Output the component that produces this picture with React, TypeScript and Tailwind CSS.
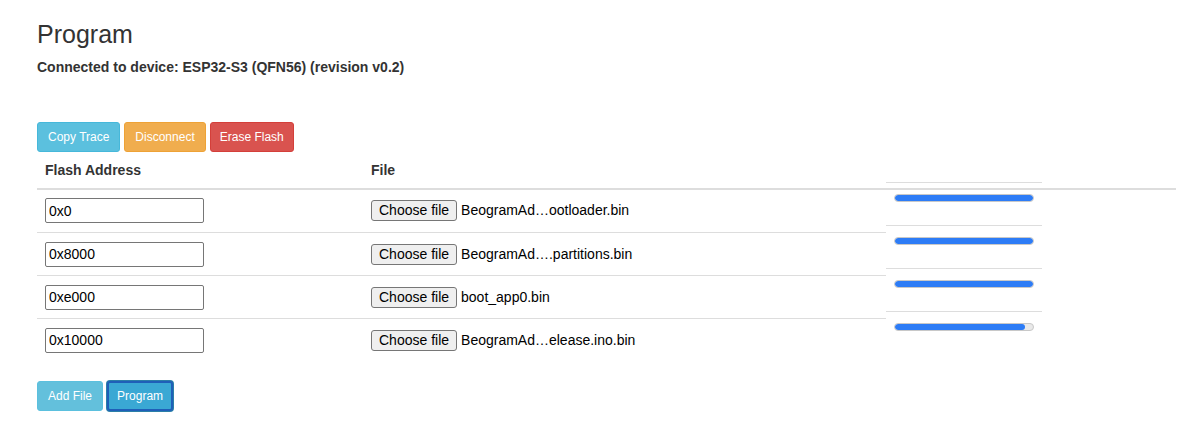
import React from "react";

const rows = [
  { addr: "0x0", file: "BeogramAd…ootloader.bin", pct: 100 },
  { addr: "0x8000", file: "BeogramAd….partitions.bin", pct: 100 },
  { addr: "0xe000", file: "boot_app0.bin", pct: 100 },
  { addr: "0x10000", file: "BeogramAd…elease.ino.bin", pct: 94 },
];

export default function App() {
  return (
    <div
      className="min-h-[431px] w-[1189px] bg-white pl-[37px] text-[#333]"
      style={{ fontFamily: '"Liberation Sans", Arial, sans-serif' }}
    >
      <h3 className="pt-[21px] text-[25px] leading-[26px] font-medium">Program</h3>
      <div className="mt-[11px] text-[14px] leading-[18px] font-bold">
        Connected to device: ESP32-S3 (QFN56) (revision v0.2)
      </div>

      <div className="mt-[46px] flex gap-[4px]">
        <button className="h-[30px] rounded-[3px] border border-[#46b8da] bg-[#5bc0de] px-[10px] text-[12px] text-white">
          Copy Trace
        </button>
        <button className="h-[30px] rounded-[3px] border border-[#eea236] bg-[#f0ad4e] px-[10px] text-[12px] text-white">
          Disconnect
        </button>
        <button className="h-[30px] rounded-[3px] border border-[#d43f3a] bg-[#d9534f] px-[9px] text-[12px] text-white">
          Erase Flash
        </button>
      </div>

      <div className="w-[1139px]">
        <div className="flex border-b-2 border-[#ddd] text-[14px] leading-[20px] font-bold">
          <div className="w-[326px] px-[8px] py-[8px]">Flash Address</div>
          <div className="w-[523px] px-[8px] py-[8px]">File</div>
        </div>
        <div className="flex items-start">
          <div className="w-[849px]">
            {rows.map((r, i) => (
              <div
                key={r.addr}
                className={`flex items-center ${i === 0 ? "h-[42px] pb-[1px]" : "h-[43px] border-t border-[#ddd]"}`}
              >
                <div className="w-[326px] px-[8px]">
                  <input
                    readOnly
                    value={r.addr}
                    className="h-[25px] w-[159px] rounded-[2px] border border-[#767676] px-[3px] text-[14px] text-black outline-none"
                    style={{ fontFamily: '"Liberation Sans", Arial, sans-serif' }}
                  />
                </div>
                <div className="flex w-[523px] items-center px-[8px] text-[14px] text-black">
                  <span className="flex h-[21px] items-center rounded-[3px] border border-[#767676] bg-[#efefef] px-[7px]">
                    Choose file
                  </span>
                  <span className="ml-[4px]">{r.file}</span>
                </div>
              </div>
            ))}
          </div>
          <div className="mt-[-8px] w-[156px]">
            {rows.map((r) => (
              <div key={r.addr} className="h-[43px] border-t border-[#ddd] pt-[11px] pl-[8px]">
                <div className="h-[8px] w-[140px] overflow-hidden rounded-full border border-[#c8c8c8] bg-[#e9e9e9]">
                  <div className="h-full rounded-full bg-[#2d7cf6]" style={{ width: `${r.pct}%` }} />
                </div>
              </div>
            ))}
          </div>
        </div>
      </div>

      <div className="mt-[20px] flex gap-[4px]">
        <button className="h-[30px] rounded-[3px] border border-[#5bc0de] bg-[#63c0dc] px-[10px] text-[12px] text-white">
          Add File
        </button>
        <button className="h-[30px] rounded-[3px] border-2 border-[#1f5fb8] bg-[#3aa8d4] px-[8px] text-[12px] text-white ring-1 ring-[#2b7fa8]">
          Program
        </button>
      </div>
    </div>
  );
}
